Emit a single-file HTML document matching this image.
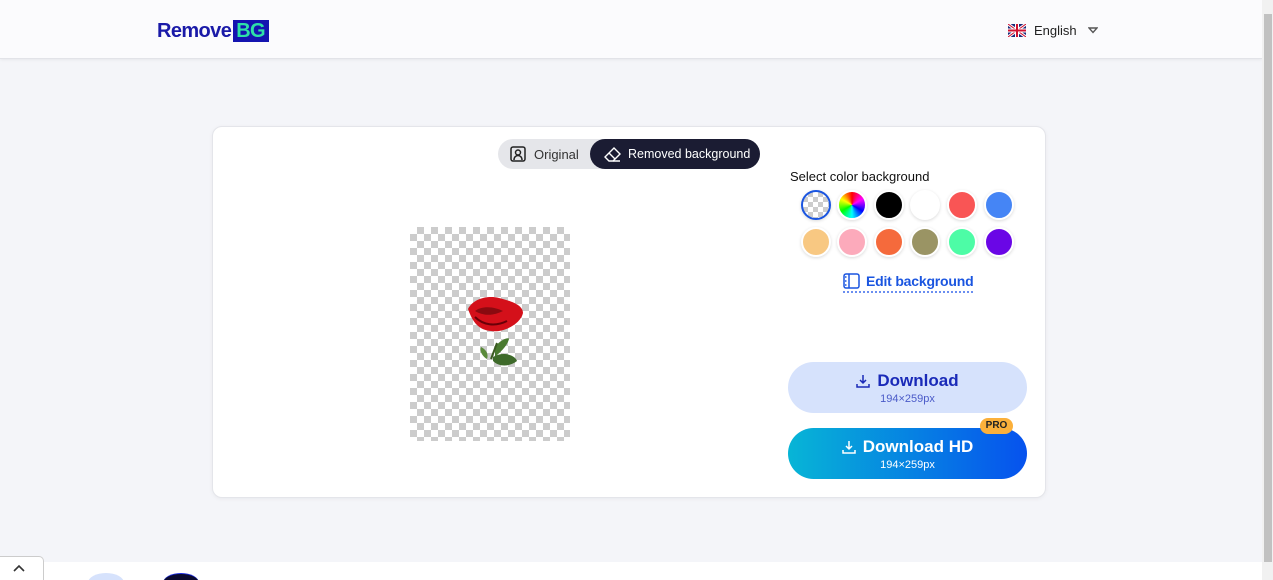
<!DOCTYPE html>
<html style="overflow:hidden"><head><meta charset="utf-8"><style>
*{box-sizing:border-box;margin:0;padding:0}
html,body{width:1273px;height:580px;overflow:hidden}
body{background:#f4f5f9;font-family:"Liberation Sans",sans-serif;position:relative}
.hdr{position:absolute;left:0;top:0;width:1262px;height:59px;background:#fbfbfd;border-bottom:1px solid #e2e3e8;box-shadow:0 1px 3px rgba(0,0,0,.06)}
.logo{position:absolute;left:157px;top:20px;font-weight:bold;font-size:20px;color:#1a1aa8;letter-spacing:-.6px;line-height:22px}
.logo span{display:inline-block;background:#1414b0;color:#2ee0a8;padding:0 4px 0 3px;margin-left:2px;height:22px}
.lang{position:absolute;left:1008px;top:23px;font-size:13px;color:#222;display:flex;align-items:center}
.sb{position:absolute;left:1262px;top:0;width:11px;height:580px;background:#f1f1f1}
.sb div{position:absolute;left:2px;top:14px;width:8px;height:548px;background:#c1c1c1}
.card{position:absolute;left:212px;top:126px;width:834px;height:372px;background:#fff;border:1px solid #e4e5ea;border-radius:10px;box-shadow:0 1px 4px rgba(0,0,0,.05)}
.tog{position:absolute;left:498px;top:139px;width:262px;height:30px;background:#e5e6ea;border-radius:15px}
.tog .o{position:absolute;left:12px;top:7px;font-size:13px;color:#333;display:flex;align-items:center;gap:8px}
.tog .r{position:absolute;left:92px;top:0;width:170px;height:30px;background:#1b1c33;border-radius:15px;color:#fff;font-size:12.5px;display:flex;align-items:center;padding-left:14px;gap:7px}
.chk{position:absolute;left:410px;top:227px;width:160px;height:214px;background-color:#fff;background-image:linear-gradient(45deg,#ccc 25%,transparent 25%,transparent 75%,#ccc 75%),linear-gradient(45deg,#ccc 25%,transparent 25%,transparent 75%,#ccc 75%);background-size:14px 14px;background-position:0 0,7px 7px}
.sel{position:absolute;left:790px;top:169px;font-size:13px;color:#111}
.c{position:absolute;width:30px;height:30px;border-radius:50%;border:2px solid #fff;box-shadow:0 1px 3px rgba(0,0,0,.15)}
.edit{position:absolute;left:843px;top:273px;font-size:14px;font-weight:bold;color:#1a55e0;display:flex;align-items:center;gap:6px;border-bottom:2px dotted #6b8ff0;padding-bottom:2px;letter-spacing:-.2px}
.btn{position:absolute;left:788px;width:239px;height:51px;border-radius:26px;text-align:center}
.b1{top:362px;background:#d6e2fc;color:#1a2ab8}
.b2{top:428px;background:linear-gradient(90deg,#07b5d6,#0652ee);color:#fff}
.btn .t{font-size:17px;font-weight:bold;margin-top:9px;display:flex;justify-content:center;align-items:center;gap:7px}
.btn .s{font-size:11px;margin-top:2px}
.b1 .s{color:#4a5ac8}
.pro{position:absolute;left:980px;top:418px;width:33px;height:16px;background:#fbb03b;border-radius:8px;font-size:10px;font-weight:bold;color:#222;text-align:center;line-height:16px}
.bot{position:absolute;left:0;top:562px;width:1262px;height:18px;background:#fff;overflow:hidden}
.tab{position:absolute;left:0;top:556px;width:44px;height:24px;background:#fff;border:1px solid #ccc;border-bottom:none;border-left:none;border-radius:0 5px 0 0}
</style></head><body>
<div class="hdr">
<div class="logo">Remove<span>BG</span></div>
<div class="lang"><svg width="18" height="13" viewBox="0 0 18 13"><rect width="18" height="13" fill="#1a2a7a"/><path d="M0 0L18 13M18 0L0 13" stroke="#fff" stroke-width="3"/><path d="M0 0L18 13M18 0L0 13" stroke="#d01030" stroke-width="1"/><path d="M9 0V13M0 6.5H18" stroke="#fff" stroke-width="4"/><path d="M9 0V13M0 6.5H18" stroke="#d01030" stroke-width="2"/></svg><span style="margin-left:8px">English</span><svg style="margin-left:11px" width="10" height="7" viewBox="0 0 10 7"><path d="M1 1H9L5 5.5Z" fill="none" stroke="#555" stroke-width="1.4"/></svg></div>
</div>
<div class="sb"><div></div></div>
<div class="card"></div>
<div class="tog"><div class="o"><svg width="16" height="16" viewBox="0 0 16 16" fill="none" stroke="#222" stroke-width="1.5"><rect x="1" y="1" width="14" height="14" rx="2"/><circle cx="8" cy="6.5" r="2.5"/><path d="M4 14c0-3 2-4.5 4-4.5s4 1.5 4 4.5"/></svg>Original</div>
<div class="r"><svg width="17" height="15" viewBox="0 0 17 15" fill="none" stroke="#fff" stroke-width="1.4"><path d="M10 1L16 7 9 14H5L1 10Z"/><path d="M5 6L11 12M9 14H16"/></svg>Removed background</div></div>
<div class="chk"></div>
<svg style="position:absolute;left:465px;top:295px" width="60" height="80" viewBox="0 0 60 80"><path d="M3 14C8 4 22 0 34 3 46 6 58 10 58 18 56 28 40 38 26 36 14 35 8 28 3 14Z" fill="#d4101a"/><path d="M10 16C18 10 30 12 38 16 30 20 20 22 10 16Z" fill="#8a0a10"/><path d="M10 22C18 30 30 32 42 26" stroke="#6a0008" stroke-width="2" fill="none"/><path d="M30 52C36 44 44 42 44 44 42 52 34 58 30 62Z" fill="#4a7a30"/><path d="M28 62C38 56 50 60 52 66 44 72 34 72 28 66Z" fill="#3e6a2a"/><path d="M16 52C20 54 24 58 22 64 18 62 14 56 16 52Z" fill="#5a8a3a"/><path d="M26 64L32 48" stroke="#3a5a20" stroke-width="2"/></svg>
<div class="sel">Select color background</div>
<div class="c" style="left:801px;top:190px;border:2px solid #1a55e0;background:repeating-conic-gradient(#ccc 0 25%,#fff 0 50%) 0 0/10px 10px"></div>
<div class="c" style="left:837px;top:190px;background:conic-gradient(red,#f0f,blue,cyan,lime,yellow,red)"></div>
<div class="c" style="left:874px;top:190px;background:#000"></div>
<div class="c" style="left:910px;top:190px;background:#fff"></div>
<div class="c" style="left:947px;top:190px;background:#f95555"></div>
<div class="c" style="left:984px;top:190px;background:#4585f5"></div>
<div class="c" style="left:801px;top:227px;background:#f8c882"></div>
<div class="c" style="left:837px;top:227px;background:#fcaabb"></div>
<div class="c" style="left:874px;top:227px;background:#f56a3c"></div>
<div class="c" style="left:910px;top:227px;background:#9a9464"></div>
<div class="c" style="left:947px;top:227px;background:#4dfca6"></div>
<div class="c" style="left:984px;top:227px;background:#6a06e6"></div>
<div class="edit"><svg width="17" height="16" viewBox="0 0 17 16" fill="none" stroke="#1a55e0" stroke-width="1.5"><rect x="1" y="1" width="15" height="14" rx="2"/><path d="M6 1V15"/><path d="M2 4h3M2 8h3M2 12h3" stroke-dasharray="1.5 1.5"/></svg>Edit background</div>
<div class="btn b1"><div class="t"><svg width="14" height="14" viewBox="0 0 14 14" fill="none" stroke="currentColor" stroke-width="1.5"><path d="M7 1V9M4 6L7 9 10 6M1 10V13H13V10"/></svg>Download</div><div class="s">194×259px</div></div>
<div class="btn b2"><div class="t"><svg width="14" height="14" viewBox="0 0 14 14" fill="none" stroke="currentColor" stroke-width="1.5"><path d="M7 1V9M4 6L7 9 10 6M1 10V13H13V10"/></svg>Download HD</div><div class="s">194×259px</div></div>
<div class="pro">PRO</div>
<div class="bot"><div style="position:absolute;left:88px;top:11px;width:36px;height:20px;border-radius:50%;background:#d6e2fc"></div><div style="position:absolute;left:163px;top:11px;width:36px;height:20px;border-radius:50%;background:#0a0a30;border-top:1px solid #1a2ae0"></div></div>
<div class="tab"><svg style="position:absolute;left:13px;top:7px" width="12" height="8" viewBox="0 0 12 8"><path d="M1 7L6 2 11 7" fill="none" stroke="#333" stroke-width="1.6"/></svg></div>
</body></html>
